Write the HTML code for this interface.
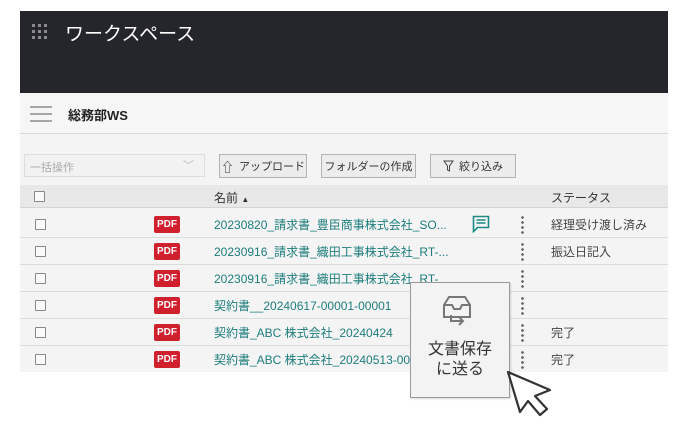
<!DOCTYPE html>
<html><head><meta charset="utf-8"><style>
*{box-sizing:border-box;margin:0;padding:0}
body{width:686px;height:431px;background:#fff;position:relative;overflow:hidden;font-family:"Liberation Sans","Noto Sans CJK JP",sans-serif;color:#333}
.abs{position:absolute}
.hdr{left:20px;top:11px;width:648px;height:82px;background:#25262b}
.main{left:20px;top:93px;width:648px;height:279px;background:#f4f4f4}
.nav{left:20px;top:93px;width:648px;height:41px;border-bottom:1px solid #d8d8d8;background:#f6f6f6}
.btn{top:154px;height:24px;border:1px solid #b4b4b4;background:#ececec;font-size:11px;color:#333;display:flex;align-items:center;justify-content:center;gap:5px}
.th{left:20px;top:185px;width:648px;height:23px;background:#e8e8e8;border-bottom:1px solid #d4d4d4;font-size:12px}
.row{left:20px;width:648px;height:27px;border-bottom:1px solid #dcdcdc;font-size:12px}
.cb{position:absolute;left:15px;top:8px;width:11px;height:11px;border:1px solid #888;background:#fafafa;border-radius:1px}
.pdf{position:absolute;left:134px;top:5px;width:26px;height:17px;background:#d0202e;color:#fff;font-size:10px;font-weight:bold;border-radius:2px;text-align:center;line-height:17px}
.nm{position:absolute;left:194px;top:5px;color:#1d7d7c;white-space:nowrap}
.dots{position:absolute;left:501px;top:4px;width:3px;height:20px;background:radial-gradient(circle,#666 1.2px,transparent 1.5px) 0 0/3px 5px}
.st{position:absolute;left:531px;top:5px;color:#444}
</style></head><body>
<div class="abs hdr"></div>
<svg class="abs" style="left:32px;top:24px" width="16" height="16"><g fill="#8a8a8e"><rect x="0" y="0" width="3" height="3"/><rect x="6" y="0" width="3" height="3"/><rect x="12" y="0" width="3" height="3"/><rect x="0" y="6" width="3" height="3"/><rect x="6" y="6" width="3" height="3"/><rect x="12" y="6" width="3" height="3"/><rect x="0" y="12" width="3" height="3"/><rect x="6" y="12" width="3" height="3"/><rect x="12" y="12" width="3" height="3"/></g></svg>
<div class="abs" style="left:65px;top:19px;color:#fff;font-size:19px">ワークスペース</div>
<div class="abs main"></div>
<div class="abs nav"></div>
<svg class="abs" style="left:30px;top:106px" width="22" height="16"><g stroke="#777" stroke-width="1.2"><line x1="0" y1="1" x2="22" y2="1"/><line x1="0" y1="8" x2="22" y2="8"/><line x1="0" y1="15" x2="22" y2="15"/></g></svg>
<div class="abs" style="left:68px;top:105px;font-size:13px;font-weight:bold;color:#222">総務部WS</div>
<div class="abs" style="left:24px;top:154px;width:181px;height:23px;border:1px solid #ddd;background:#f2f2f2;font-size:11px;color:#aaa;padding:4px 5px">一括操作<span style="position:absolute;right:10px;top:2px;color:#bbb">﹀</span></div>
<div class="abs btn" style="left:219px;width:88px"><span style="font-size:13px">⇧</span>アップロード</div>
<div class="abs btn" style="left:321px;width:95px">フォルダーの作成</div>
<div class="abs btn" style="left:430px;width:86px"><svg width="11" height="12"><path d="M1 1h9L6.5 6v5L4.5 10V6z" fill="none" stroke="#444"/></svg>絞り込み</div>
<div class="abs th"><div class="cb" style="top:6px;left:14px"></div><span style="position:absolute;left:194px;top:4px">名前 <span style="font-size:8px">▲</span></span><span style="position:absolute;left:531px;top:4px">ステータス</span></div>
<div class="abs row" style="top:211px"><div class="cb"></div><div class="pdf">PDF</div><div class="nm">20230820_請求書_豊臣商事株式会社_SO...</div><svg style="position:absolute;left:452px;top:4px" width="18" height="18"><path d="M1.5 1.5h15v11h-11l-4 4z" fill="none" stroke="#1d8a88" stroke-width="1.6"/><path d="M4.5 5h9M4.5 8h9" stroke="#1d8a88" stroke-width="1.4"/></svg><div class="dots"></div><div class="st">経理受け渡し済み</div></div>
<div class="abs row" style="top:238px"><div class="cb"></div><div class="pdf">PDF</div><div class="nm">20230916_請求書_織田工事株式会社_RT-...</div><div class="dots"></div><div class="st">振込日記入</div></div>
<div class="abs row" style="top:265px"><div class="cb"></div><div class="pdf">PDF</div><div class="nm">20230916_請求書_織田工事株式会社_RT-</div><div class="dots"></div></div>
<div class="abs row" style="top:292px"><div class="cb"></div><div class="pdf">PDF</div><div class="nm">契約書__20240617-00001-00001</div><div class="dots"></div></div>
<div class="abs row" style="top:319px"><div class="cb"></div><div class="pdf">PDF</div><div class="nm">契約書_ABC 株式会社_20240424</div><div class="dots"></div><div class="st">完了</div></div>
<div class="abs row" style="top:346px;border-bottom:none;height:26px"><div class="cb"></div><div class="pdf">PDF</div><div class="nm">契約書_ABC 株式会社_20240513-00</div><div class="dots"></div><div class="st">完了</div></div>
<div class="abs" style="left:410px;top:282px;width:100px;height:116px;background:#f3f3f3;border:1px solid #999;box-shadow:1px 1px 2px rgba(0,0,0,.15)"></div>
<svg class="abs" style="left:440px;top:294px" width="36" height="36"><path d="M4 11L9 3h16l5 8v12H4z" fill="none" stroke="#777" stroke-width="2"/><path d="M4 11h8l2 4h6l2-4h8" fill="none" stroke="#777" stroke-width="2"/><path d="M11 21v6h11M19 23l4 4-4 4" fill="none" stroke="#777" stroke-width="2"/></svg>
<div class="abs" style="left:410px;top:340px;width:100px;text-align:center;font-size:16px;line-height:20px;color:#333">文書保存<br>に送る</div>
<svg class="abs" style="left:500px;top:365px" width="60" height="56"><path d="M8 7L20 47 28 36 40 50 47 44 35 31 50 25z" fill="#fff" stroke="#333" stroke-width="2.2" stroke-linejoin="round"/></svg>
</body></html>
